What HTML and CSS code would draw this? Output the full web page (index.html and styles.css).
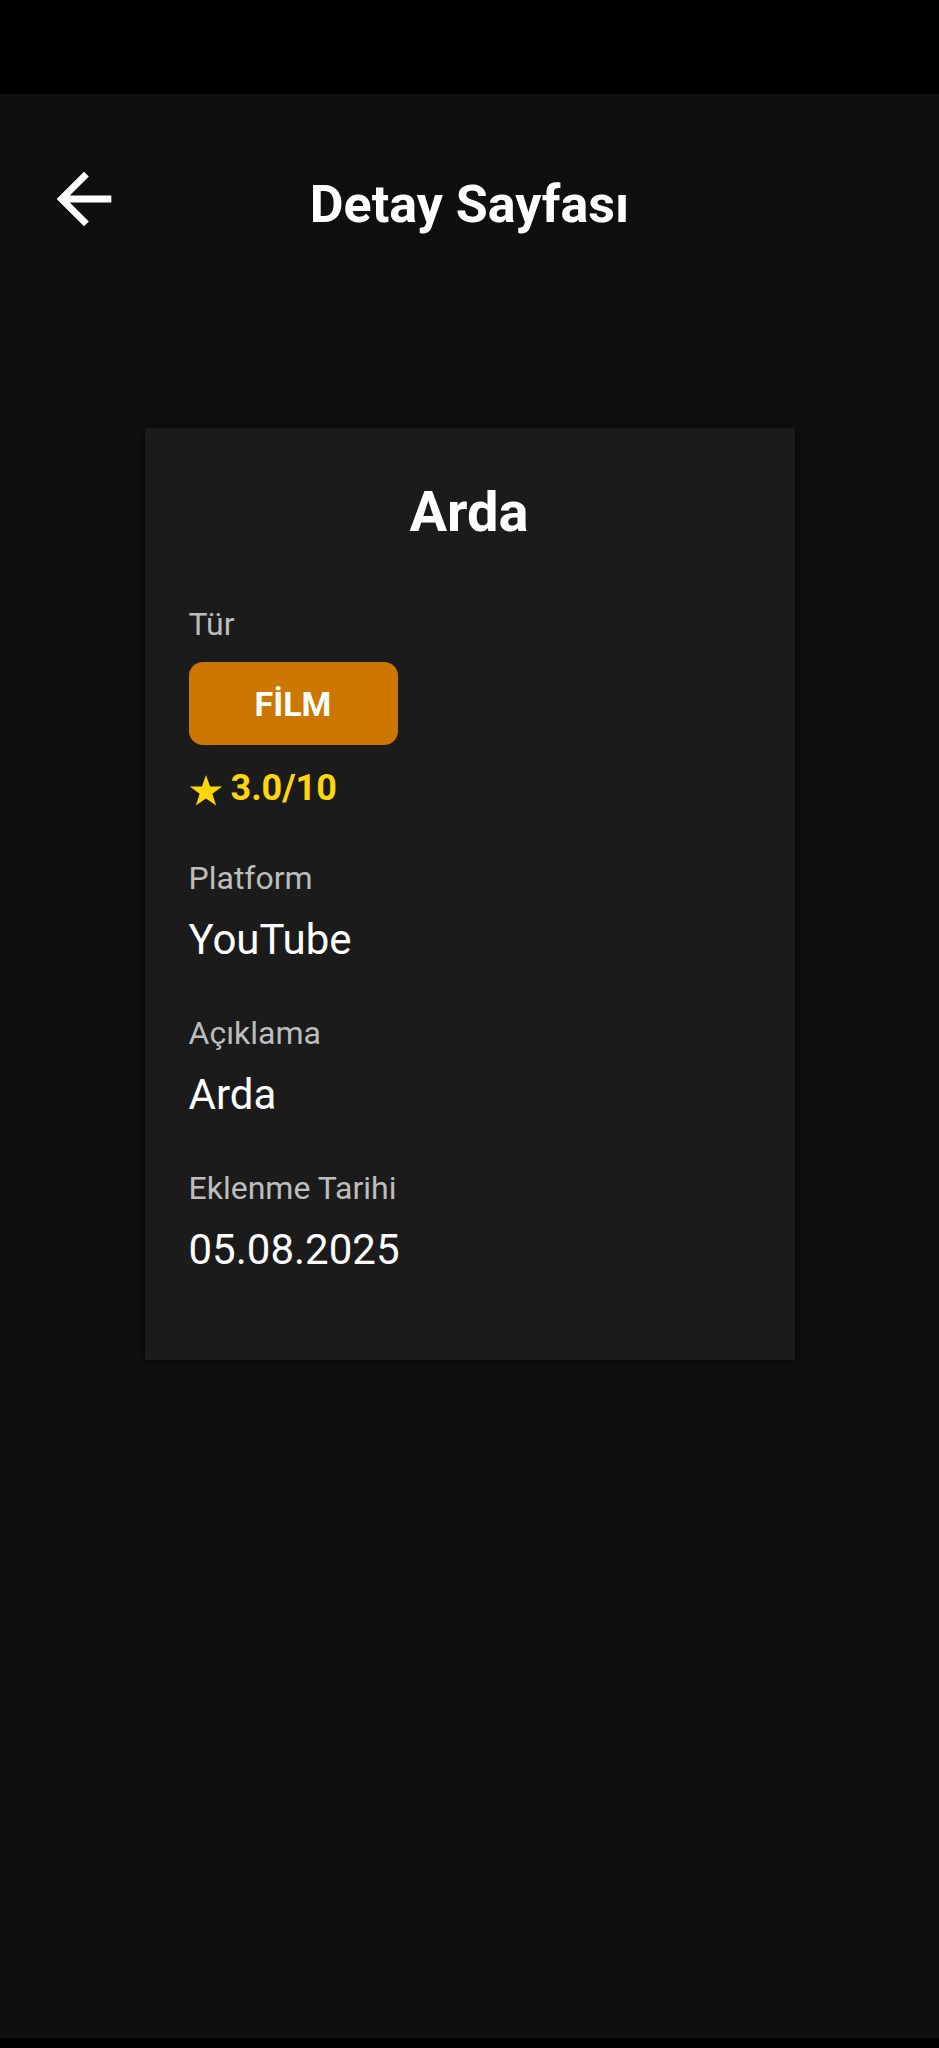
FILE: index.html
```html
<!DOCTYPE html>
<html lang="tr">
<head>
<meta charset="utf-8">
<title>Detay Sayfası</title>
<link rel="stylesheet" href="styles.css">
</head>
<body>
<div class="screen">
  <div class="status-bar"></div>
  <main class="content">
    <header class="topbar">
      <button class="back" aria-label="Geri">
        <svg viewBox="0 0 24 24" width="82" height="82"><path fill="#ffffff" d="M20 11H7.83l5.59-5.59L12 4l-8 8 8 8 1.41-1.41L7.83 13H20v-2z"/></svg>
      </button>
      <h1 class="title">Detay Sayfası</h1>
      <span class="spacer"></span>
    </header>

    <section class="card">
      <h2 class="card-title">Arda</h2>
      <div class="label first">Tür</div>
      <div class="chip">FİLM</div>
      <div class="rating">
        <svg class="star" viewBox="0 0 24 22" width="34" height="31"><path fill="#ffd60a" d="M12 0l2.9 8.1H23.5l-7 5.2 2.7 8.4L12 16.6 4.8 21.7l2.7-8.4-7-5.2h8.6z"/></svg>
        <span class="score">3.0/10</span>
      </div>
      <div class="field">
        <div class="label">Platform</div>
        <div class="value">YouTube</div>
      </div>
      <div class="field">
        <div class="label">Açıklama</div>
        <div class="value">Arda</div>
      </div>
      <div class="field">
        <div class="label">Eklenme Tarihi</div>
        <div class="value">05.08.2025</div>
      </div>
    </section>
  </main>
  <div class="nav-bar"></div>
</div>
</body>
</html>
```

FILE: styles.css
```css
* { box-sizing: border-box; }

html, body {
  margin: 0;
  padding: 0;
  background: #0f0f0f;
}

body {
  font-family: Roboto, "Noto Sans", "Liberation Sans", sans-serif;
  color: #ffffff;
}

.screen {
  height: 2048px;
  display: flex;
  flex-direction: column;
}

.status-bar {
  height: 94px;
  background: #000000;
  flex: none;
}

.content {
  flex: 1;
  background: #0f0f0f;
}

.nav-bar {
  height: 10px;
  background: #000000;
  flex: none;
}

.topbar {
  display: grid;
  grid-template-columns: 82px 1fr 82px;
  align-items: start;
  padding: 64px 43px 0;
}

.back {
  width: 82px;
  height: 82px;
  padding: 0;
  margin: 0;
  border: 0;
  background: none;
  display: block;
}

.back svg { display: block; }

.title {
  margin: 15px 0 0;
  font-size: 52px;
  line-height: 64px;
  font-weight: 700;
  text-align: center;
}

.card {
  width: 650px;
  margin: 188px auto 0;
  background: #1b1b1b;
  padding: 52px 45px 85px 44px;
  box-shadow: 0 2px 10px rgba(0, 0, 0, 0.6);
}

.card-title {
  margin: 0;
  font-size: 56px;
  line-height: 64px;
  font-weight: 700;
  text-align: center;
}

.label {
  font-size: 32px;
  line-height: 40px;
  color: #bdbdbd;
}

.label.first { margin-top: 60px; }

.chip {
  margin-top: 18px;
  width: 209px;
  height: 83px;
  border-radius: 14px;
  background: #cc7700;
  display: flex;
  align-items: center;
  justify-content: center;
  font-size: 34px;
  font-weight: 700;
  color: #ffffff;
}

.rating {
  margin-top: 23px;
  height: 40px;
  display: flex;
  align-items: center;
  gap: 8px;
  color: #ffd60a;
}

.star { display: block; margin-top: 4px; }

.score {
  font-size: 36px;
  line-height: 40px;
  font-weight: 700;
}

.field { margin-top: 48px; }
.rating + .field { margin-top: 50px; }

.value {
  margin-top: 17px;
  font-size: 42px;
  line-height: 50px;
  color: #ffffff;
}
```
